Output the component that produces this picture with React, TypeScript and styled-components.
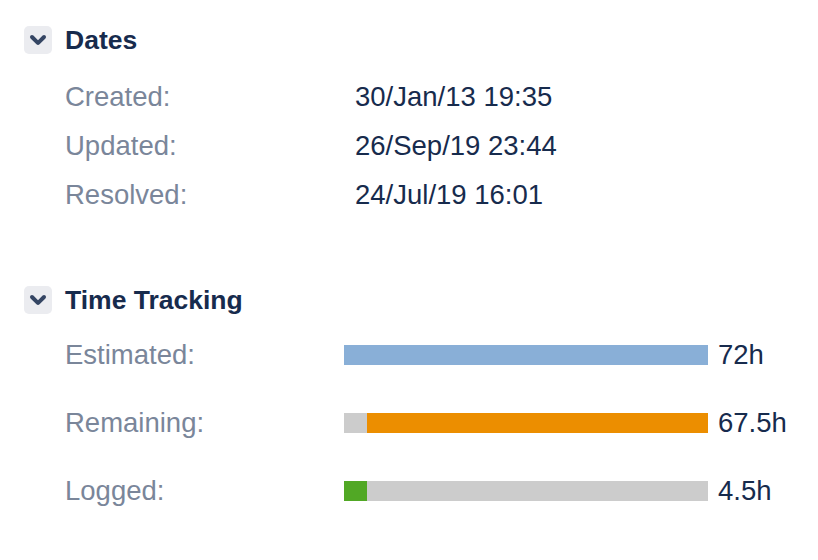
import React from "react";
import styled, { createGlobalStyle } from "styled-components";

const Global = createGlobalStyle`
  html, body { margin: 0; padding: 0; background: #ffffff; }
  body { font-family: "Liberation Sans", Arial, Helvetica, sans-serif; }
`;

const Page = styled.div`
  padding: 26px 0 0 24px;
  display: flex;
  flex-direction: column;
`;

const Section = styled.section<{ $gapAfter?: number }>`
  display: flex;
  flex-direction: column;
  margin-bottom: ${(p) => p.$gapAfter ?? 0}px;
`;

const Header = styled.div`
  display: flex;
  align-items: center;
  gap: 13px;
  height: 28px;
`;

const Toggle = styled.button`
  width: 28px;
  height: 28px;
  padding: 0;
  border: none;
  border-radius: 5px;
  background: #ebecf0;
  display: flex;
  align-items: center;
  justify-content: center;
  cursor: pointer;
`;

const Title = styled.h2`
  margin: 0;
  font-size: 26.5px;
  line-height: 28px;
  font-weight: 700;
  color: #172b4d;
`;

const Rows = styled.div<{ $top: number }>`
  display: grid;
  grid-template-columns: 279px auto;
  margin: ${(p) => p.$top}px 0 0 41px;
`;

const Label = styled.div<{ $h: number }>`
  font-size: 27.5px;
  line-height: ${(p) => p.$h}px;
  height: ${(p) => p.$h}px;
  color: #7a869a;
`;

const Value = styled.div`
  font-size: 27.5px;
  line-height: 49px;
  color: #172b4d;
  padding-left: 11px;
`;

const BarCell = styled.div`
  display: flex;
  align-items: center;
  gap: 10px;
  height: 68px;
`;

const Bar = styled.div`
  width: 364px;
  height: 20px;
  display: flex;
  background: #cccccc;
`;

const Fill = styled.div<{ $color: string }>`
  height: 100%;
  background: ${(p) => p.$color};
`;

const Hours = styled.span`
  font-size: 27.5px;
  color: #172b4d;
`;

const Chevron = () => (
  <svg width="28" height="28" viewBox="5 5.5 14 14" aria-hidden="true">
    <path
      fill="#344563"
      d="M8.292 10.293a1.009 1.009 0 0 0 0 1.419l2.939 2.965c.218.215.5.322.779.322s.556-.107.769-.322l2.93-2.955a1.01 1.01 0 0 0 0-1.419.987.987 0 0 0-1.406 0l-2.298 2.317-2.307-2.327a.99.99 0 0 0-1.406 0z"
    />
  </svg>
);

const dates = [
  ["Created:", "30/Jan/13 19:35"],
  ["Updated:", "26/Sep/19 23:44"],
  ["Resolved:", "24/Jul/19 16:01"],
];

type Track = {
  label: string;
  hours: string;
  segments: { color: string; fraction: number }[];
};

const TOTAL = 72;
const tracks: Track[] = [
  { label: "Estimated:", hours: "72h", segments: [{ color: "#89afd7", fraction: 1 }] },
  {
    label: "Remaining:",
    hours: "67.5h",
    segments: [
      { color: "transparent", fraction: 4.5 / TOTAL },
      { color: "#ec8e00", fraction: 67.5 / TOTAL },
    ],
  },
  { label: "Logged:", hours: "4.5h", segments: [{ color: "#51a825", fraction: 4.5 / TOTAL }] },
];

export default function App() {
  return (
    <>
      <Global />
      <Page>
        <Section $gapAfter={67}>
          <Header>
            <Toggle aria-label="collapse">
              <Chevron />
            </Toggle>
            <Title>Dates</Title>
          </Header>
          <Rows $top={18}>
            {dates.map(([l, v]) => (
              <React.Fragment key={l}>
                <Label $h={49}>{l}</Label>
                <Value>{v}</Value>
              </React.Fragment>
            ))}
          </Rows>
        </Section>
        <Section>
          <Header>
            <Toggle aria-label="collapse">
              <Chevron />
            </Toggle>
            <Title>Time Tracking</Title>
          </Header>
          <Rows $top={7}>
            {tracks.map((t) => (
              <React.Fragment key={t.label}>
                <Label $h={68}>{t.label}</Label>
                <BarCell>
                  <Bar>
                    {t.segments.map((s, i) => (
                      <Fill
                        key={i}
                        $color={s.color}
                        style={{ width: `${s.fraction * 100}%` }}
                      />
                    ))}
                  </Bar>
                  <Hours>{t.hours}</Hours>
                </BarCell>
              </React.Fragment>
            ))}
          </Rows>
        </Section>
      </Page>
    </>
  );
}
